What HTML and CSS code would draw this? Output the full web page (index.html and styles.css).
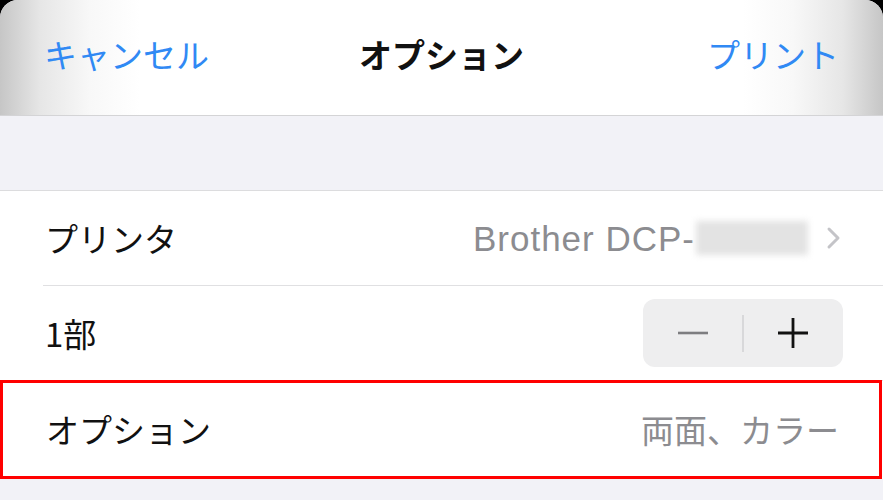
FILE: index.html
```html
<!DOCTYPE html>
<html lang="ja">
<head>
<meta charset="utf-8">
<link rel="stylesheet" href="styles.css">
</head>
<body>
<div class="screen">
  <header class="header">
    <span class="nav-btn left">キャンセル</span>
    <span class="title">オプション</span>
    <span class="nav-btn right">プリント</span>
  </header>
  <div class="spacer"></div>
  <section class="list">
    <div class="row">
      <span class="label">プリンタ</span>
      <span class="value printer">Brother DCP-<span class="blur"></span>
        <svg class="chevron" width="16" height="24" viewBox="0 0 16 24"><path d="M3 3 L12 12 L3 21" fill="none" stroke="#c4c4c8" stroke-width="3" stroke-linecap="round" stroke-linejoin="round"/></svg>
      </span>
    </div>
    <div class="row">
      <span class="label">1部</span>
      <div class="stepper">
        <span class="step minus"><svg width="32" height="32" viewBox="0 0 32 32"><path d="M1 16 H31" stroke="#7d7d80" stroke-width="2.6"/></svg></span>
        <span class="step-div"></span>
        <span class="step plus"><svg width="32" height="32" viewBox="0 0 32 32"><path d="M1 16 H31 M16 1 V31" stroke="#111" stroke-width="2.8"/></svg></span>
      </div>
    </div>
    <div class="row highlight">
      <span class="label">オプション</span>
      <span class="value">両面、カラー</span>
    </div>
  </section>
</div>
</body>
</html>
```

FILE: styles.css
```css
html, body {
  margin: 0;
  padding: 0;
  background: #000;
}
body {
  font-family: "Noto Sans CJK JP", "Noto Sans", sans-serif;
  width: 883px;
  height: 500px;
  overflow: hidden;
}
.screen {
  width: 883px;
  height: 500px;
  background: #f2f2f7;
  border-radius: 18px 18px 0 0;
  overflow: hidden;
}
.header {
  height: 116px;
  box-sizing: border-box;
  border-bottom: 1px solid #d4d4d6;
  display: grid;
  grid-template-columns: 1fr auto 1fr;
  align-items: center;
  padding: 0 44px 6px 44px;
  background: linear-gradient(to right, #c6c6c6 0px, #e6e6e6 40px, #f8f8f8 90px, #fff 140px, #fff 743px, #f8f8f8 793px, #e6e6e6 843px, #c6c6c6 883px);
}
.nav-btn {
  font-size: 33px;
  color: #3089f4;
  line-height: 1;
}
.nav-btn.right { justify-self: end; }
.title {
  font-size: 33px;
  font-weight: 700;
  color: #111;
  line-height: 1;
}
.spacer {
  height: 74px;
  border-bottom: 1px solid #dcdcde;
}
.list {
  background: #fff;
}
.row {
  height: 95px;
  box-sizing: border-box;
  margin-left: 43px;
  padding: 0 41px 0 2px;
  border-bottom: 1px solid #e0e0e2;
  display: flex;
  align-items: center;
  justify-content: space-between;
}
.label {
  font-size: 33px;
  color: #111;
  line-height: 1;
}
.value {
  font-size: 33px;
  color: #8c8c90;
  line-height: 1;
  display: flex;
  align-items: center;
}
.printer {
  font-family: "Liberation Sans", "Noto Sans", sans-serif;
  font-size: 35px;
  letter-spacing: 1px;
}
.blur {
  display: inline-block;
  width: 112px;
  height: 34px;
  margin-left: 1px;
  background: #e3e3e3;
  filter: blur(3px);
}
.chevron {
  margin-left: 18px;
}
.stepper {
  width: 200px;
  height: 68px;
  margin-right: -1px;
  border-radius: 12px;
  background: #eeeeef;
  display: flex;
  align-items: center;
}
.step {
  flex: 1;
  display: flex;
  justify-content: center;
  align-items: center;
}
.step-div {
  width: 1.5px;
  height: 37px;
  background: #d8d8da;
}
.highlight {
  height: 99px;
  margin-left: 0;
  margin-top: -1px;
  padding: 0 40px 0 43px;
  border: 3px solid #ff0000;
  margin-right: 1px;
}
```
